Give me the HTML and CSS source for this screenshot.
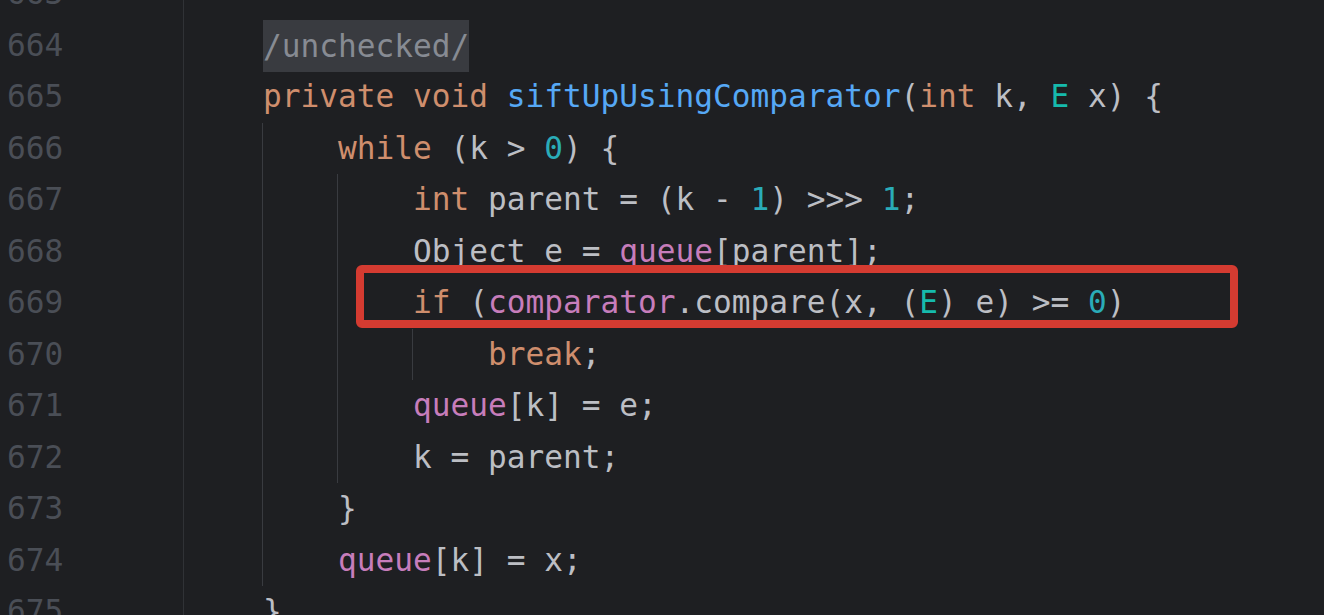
FILE: index.html
```html
<!DOCTYPE html>
<html>
<head>
<meta charset="utf-8">
<link rel="stylesheet" href="styles.css">
</head>
<body>
<div class="editor">
  <div class="gutter">
    <div class="ln">663</div>
    <div class="ln">664</div>
    <div class="ln">665</div>
    <div class="ln">666</div>
    <div class="ln">667</div>
    <div class="ln">668</div>
    <div class="ln">669</div>
    <div class="ln">670</div>
    <div class="ln">671</div>
    <div class="ln">672</div>
    <div class="ln">673</div>
    <div class="ln">674</div>
    <div class="ln">675</div>
  </div>
  <div class="code">
    <div class="line"> </div>
    <div class="line"><span class="fold">/unchecked/</span></div>
    <div class="line"><span class="kw">private void </span><span class="fn">siftUpUsingComparator</span>(<span class="kw">int </span>k, <span class="tp">E</span> x) {</div>
    <div class="block">
      <div class="line">    <span class="kw">while </span>(k &gt; <span class="num">0</span>) {</div>
      <div class="block">
        <div class="line">    <span class="kw">int </span>parent = (k - <span class="num">1</span>) &gt;&gt;&gt; <span class="num">1</span>;</div>
        <div class="line">    Object e = <span class="fld">queue</span>[parent];</div>
        <div class="line mark">    <span class="kw">if </span>(<span class="fld">comparator</span>.compare(x, (<span class="tp">E</span>) e) &gt;= <span class="num">0</span>)<span class="redbox"></span></div>
        <div class="block">
          <div class="line">    <span class="kw">break</span>;</div>
        </div>
        <div class="line">    <span class="fld">queue</span>[k] = e;</div>
        <div class="line">    k = parent;</div>
      </div>
      <div class="line">    }</div>
      <div class="line">    <span class="fld">queue</span>[k] = x;</div>
    </div>
    <div class="line">}</div>
  </div>
</div>
</body>
</html>
```

FILE: styles.css
```css
html, body {
  margin: 0;
  padding: 0;
  background: #1e1f22;
  height: 615px;
  overflow: hidden;
}

.editor {
  display: flex;
  margin-top: -32px;
  font-family: "DejaVu Sans Mono", "Liberation Mono", monospace;
  font-size: 31.15px;
  line-height: 51.5px;
  color: #bcbec4;
}

.gutter {
  width: 176px;
  padding-left: 7px;
  border-right: 1px solid #303236;
  color: #4a4e56;
  min-height: 700px;
}

.ln {
  white-space: pre;
}

.code {
  padding-left: 79px;
  flex: 1;
}

.line {
  white-space: pre;
  height: 51.5px;
}

.block {
  margin-left: -1px;
  border-left: 1px solid #393b40;
}

.block .block {
  margin-left: calc(4ch - 1px);
}

.mark {
  position: relative;
}

.redbox {
  position: absolute;
  left: 18px;
  top: -12px;
  width: 882px;
  height: 63px;
  box-sizing: border-box;
  border: 8px solid #d43b31;
  border-radius: 6px;
}

.fold {
  display: inline-block;
  background: #393b40;
  color: #878b93;
  line-height: 52px;
  vertical-align: 3px;
}

.kw { color: #cf8e6d; }
.fn { color: #56a8f5; }
.fld { color: #c77dbb; }
.num { color: #2aacb8; }
.tp { color: #16baac; }
```
